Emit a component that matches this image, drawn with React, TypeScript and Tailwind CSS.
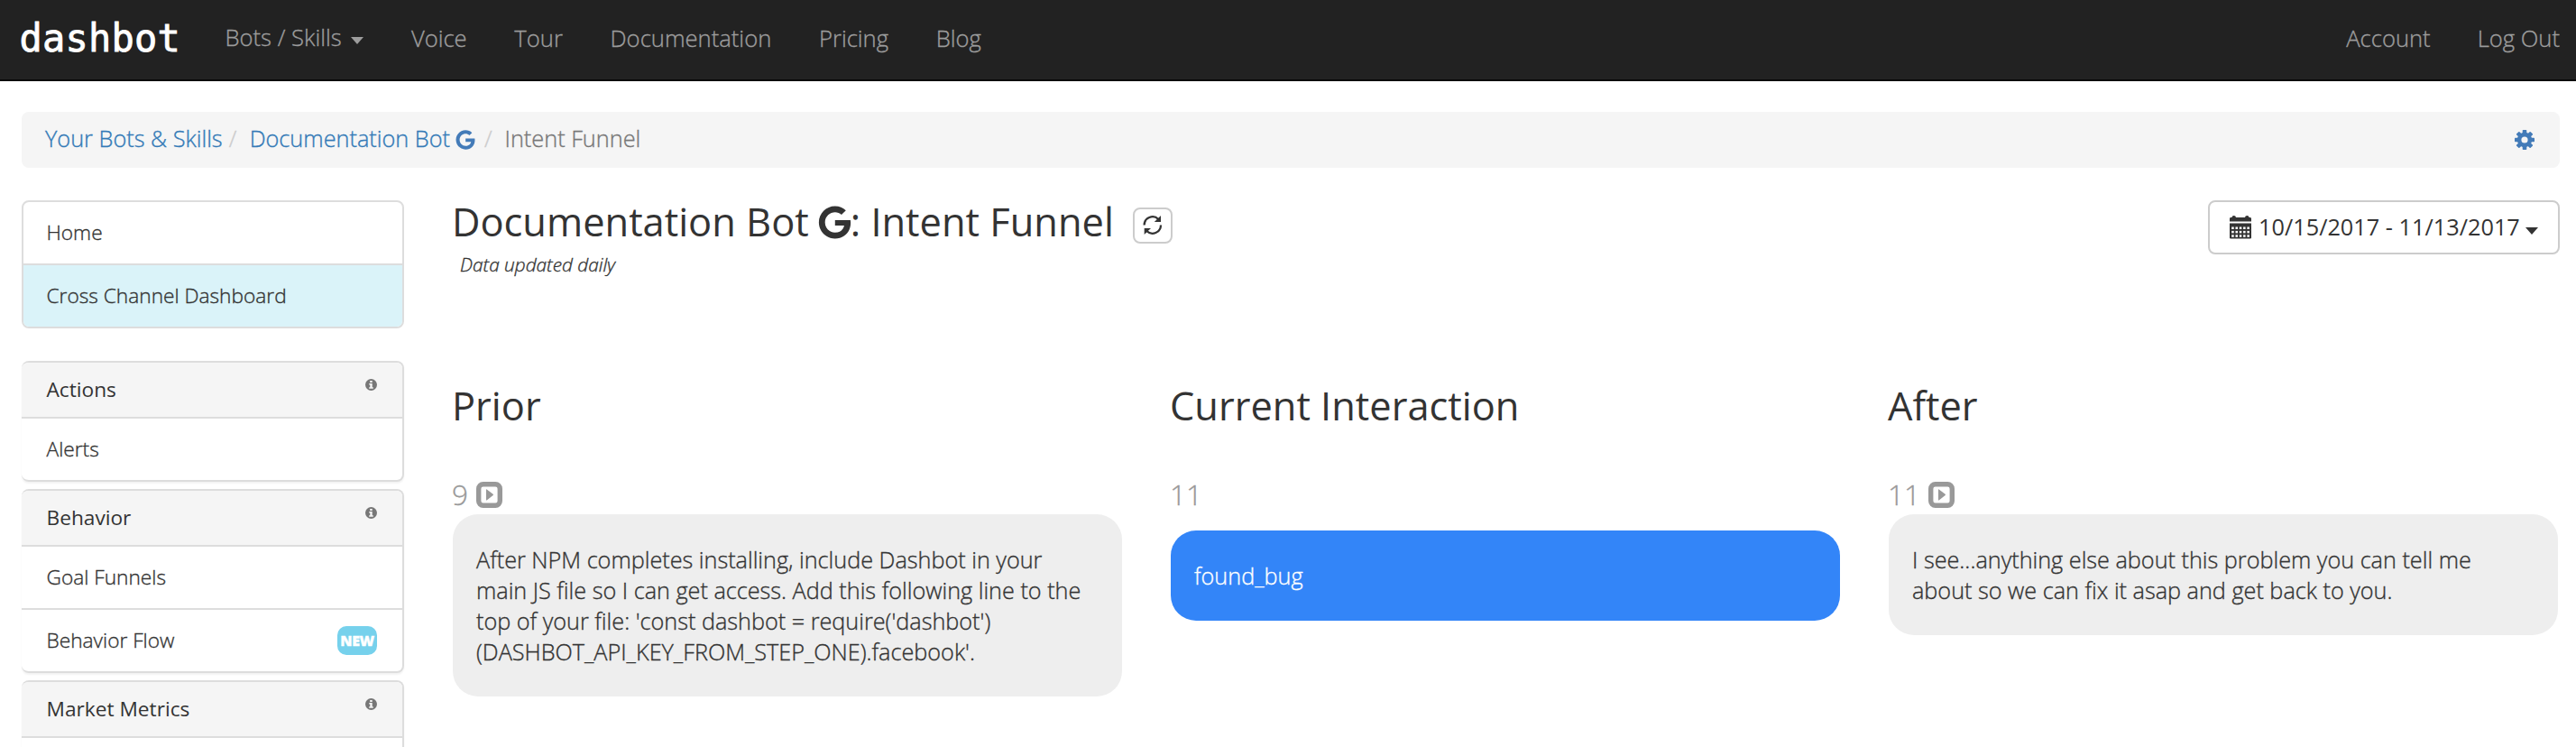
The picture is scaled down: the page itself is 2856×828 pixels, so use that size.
import type { ReactNode } from "react";
import { FaGoogle } from "react-icons/fa";

const LIGHT = "font-light [-webkit-text-stroke:0.35px_currentColor]";

function Caret({ className = "" }: { className?: string }) {
  return (
    <svg className={"h-2 w-3.5 shrink-0 " + className} viewBox="0 0 14 8" fill="currentColor">
      <path d="M0 0h14L7 8z" />
    </svg>
  );
}

function InfoIcon() {
  return (
    <svg className="h-[13px] w-[13px] shrink-0" viewBox="0 0 13 13">
      <circle cx="6.5" cy="6.5" r="6.5" fill="#777" />
      <path d="M5.2 1.9h2.5v2H5.2zM4.3 5h3.4v4.2h1.1v1.5H4.2V9.2h1.1V6.4h-1z" fill="#f5f5f5" />
    </svg>
  );
}

const TEETH = [0, 45, 90, 135, 180, 225, 270, 315];

function GearIcon() {
  return (
    <svg className="h-[22px] w-[22px] text-[#437bb8]" viewBox="-11 -11 22 22">
      <circle r="5.9" fill="none" stroke="currentColor" strokeWidth="4.6" />
      {TEETH.map((a) => (
        <rect key={a} x="-2.3" y="-11" width="4.6" height="5" rx="0.8" fill="currentColor" transform={`rotate(${a})`} />
      ))}
    </svg>
  );
}

function RefreshIcon() {
  return (
    <svg className="h-[22px] w-[22px]" viewBox="0 0 22 22" fill="#333">
      <path d="M1.6 10.5A9.2 9.2 0 0 1 17.3 4" fill="none" stroke="#333" strokeWidth="2.3" />
      <path d="M20 0v6.9h-7.2z" />
      <path d="M20 10.5A9.2 9.2 0 0 1 4.3 17" fill="none" stroke="#333" strokeWidth="2.3" />
      <path d="M1.7 21v-7.1H9z" />
    </svg>
  );
}

function CalendarIcon() {
  return (
    <svg className="h-[26px] w-6 shrink-0" viewBox="0 0 24 26" fill="#333">
      <path d="M0 6.6V3.4Q0 2 1.4 2h1Q2.6 0 4.7 0T7 2h10q.2-2 2.3-2t2.3 2h1Q24 2 24 3.4v3.2z" />
      <path d="M0 8.6h24v15.6q0 1.2-1.2 1.2H1.2Q0 25.4 0 24.2z" />
      {[12.5, 16.9, 21.3].map((y) =>
        [2.2, 6.5, 10.8, 15.1, 19.4].map((x) => <rect key={x + "," + y} x={x} y={y} width="2.5" height="2.5" fill="#fff" />)
      )}
    </svg>
  );
}

function PlayIcon() {
  return (
    <svg className="h-[29px] w-[29px] shrink-0" viewBox="0 0 29 29">
      <rect x="2.7" y="2.7" width="23.6" height="23.6" rx="5" fill="none" stroke="#999" strokeWidth="5.4" />
      <path d="M11 8.9q0-.8.7-.4l7 5.3q.6.7 0 1.3l-7 5.3q-.7.4-.7-.4z" fill="#999" />
    </svg>
  );
}

function Panel({ title, children }: { title: string; children?: ReactNode }) {
  return (
    <section className="mb-2 overflow-hidden rounded-lg border-y-2 border-r-2 border-[#ddd] bg-white shadow-[0_2px_2px_rgba(0,0,0,0.05)]">
      <h3 className="flex h-[60px] justify-between bg-[#f5f5f5] pr-7 pl-[27.5px]">
        <span className="leading-[60px]">{title}</span>
        <span className="pt-[18px]">
          <InfoIcon />
        </span>
      </h3>
      {children}
    </section>
  );
}

function PanelRow({ label, badge }: { label?: string; badge?: string }) {
  return (
    <div className={"flex h-[70px] items-center justify-between border-t-2 border-[#ddd] pr-7 pl-[27.5px] " + LIGHT}>
      <span>{label}</span>
      {badge && (
        <span className="flex h-8 w-11 items-center justify-center rounded-[10px] bg-[#76d1ec] text-[16px] font-extrabold tracking-[-0.4px] text-white">
          {badge}
        </span>
      )}
    </div>
  );
}

type ColumnProps = { title: string; count: number; lines: string[]; current?: boolean };

function Column({ title, count, lines, current }: ColumnProps) {
  return (
    <section className="w-[742px]">
      <h2 className="-ml-px h-12 text-[43.4px] leading-[50px]">{title}</h2>
      <div className={"mt-[60px] -ml-px flex h-[30px] items-center text-[31.5px] text-[#999] " + LIGHT}>
        <span className="mr-[9px] leading-[30px]">{count}</span>
        {!current && <PlayIcon />}
      </div>
      <div
        className={
          "rounded-[28px] py-[33px] pl-[26px] text-[25.22px] leading-[34px] whitespace-nowrap " +
          LIGHT +
          (current ? " mt-[25px] bg-[#3385f8] text-white" : " mt-[7px] bg-[#eee]")
        }
      >
        {lines.map((l) => (
          <p key={l}>{l}</p>
        ))}
      </div>
    </section>
  );
}

export default function App() {
  return (
    <div className="h-[828px] w-[2856px] overflow-hidden bg-white font-['Open_Sans',sans-serif] text-[#333]">
      <nav
        className={
          "flex h-[90px] items-center border-b-2 border-[#080808] bg-[#222] pr-[18px] pb-[2px] pl-[21.5px] text-[25.6px] text-[#9d9d9d] " +
          LIGHT
        }
      >
        <span className="w-[228px] font-['DejaVu_Sans_Mono',monospace] text-[42px] leading-[60px] font-normal tracking-[0.2px] text-white [-webkit-text-stroke:0.8px_white]">
          dashbot
        </span>
        <div className="flex grow items-center gap-[52.7px]">
          <span className="flex items-center pb-[2px]">
            Bots / Skills <Caret className="mt-[7px] ml-[10.5px]" />
          </span>
          <span>Voice</span>
          <span>Tour</span>
          <span>Documentation</span>
          <span>Pricing</span>
          <span>Blog</span>
        </div>
        <div className="flex gap-[52px]">
          <span>Account</span>
          <span>Log Out</span>
        </div>
      </nav>

      <div
        className={
          "mx-6 mt-[34px] flex h-[62px] w-[2814px] items-center rounded-lg bg-[#f5f5f5] pr-7 pb-[2px] pl-[26px] text-[25.3px] " +
          LIGHT
        }
      >
        <span className="text-[#337ab7]">Your Bots &amp; Skills</span>
        <span className="mr-[14px] ml-[7px] w-[9px] text-[#ccc]">/</span>
        <span className="flex items-center text-[#337ab7]">
          Documentation Bot <FaGoogle className="mt-0.5 ml-[6px] h-[22px] w-[22px] text-[#437bb8]" />
        </span>
        <span className="mr-[13.5px] ml-[10px] w-[9px] text-[#ccc]">/</span>
        <span className="grow text-[#777]">Intent Funnel</span>
        <span className="pt-[2px]">
          <GearIcon />
        </span>
      </div>

      <div className="mt-9 flex pl-6">
        <aside className="w-[424px] shrink-0 text-[22.7px]">
          <div className={"mb-9 overflow-hidden rounded-lg border-2 border-[#ddd] " + LIGHT}>
            <div className="h-[68px] pl-[25.5px] leading-[68px]">Home</div>
            <div className="h-[70px] border-t-2 border-[#ddd] bg-[#daf3f9] pl-[25.5px] leading-[68px]">
              Cross Channel Dashboard
            </div>
          </div>
          <Panel title="Actions">
            <PanelRow label="Alerts" />
          </Panel>
          <Panel title="Behavior">
            <PanelRow label="Goal Funnels" />
            <PanelRow label="Behavior Flow" badge="NEW" />
          </Panel>
          <Panel title="Market Metrics">
            <PanelRow />
          </Panel>
        </aside>

        <main className="ml-[54px] w-[2336px]">
          <header className="flex h-[84px] items-start justify-between">
            <div>
              <div className="flex h-[46px] items-center">
                <h1 className="-ml-px flex items-center pt-[2px] text-[43.4px] leading-[46px] whitespace-nowrap">
                  Documentation Bot
                  <FaGoogle className="mt-[1px] mr-[-1px] ml-[10px] h-[37px] w-[37px]" />: Intent Funnel
                </h1>
                <span className="mt-[10px] ml-[21px] flex h-10 w-11 items-center justify-center rounded-lg border-2 border-[#ccc]">
                  <RefreshIcon />
                </span>
              </div>
              <p className={"mt-[11px] ml-2 text-[20.8px] leading-7 italic " + LIGHT}>Data updated daily</p>
            </div>
            <div className="flex h-[60px] w-[390px] items-center rounded-lg border-2 border-[#ccc] pl-[22px] text-[25.3px] whitespace-nowrap">
              <CalendarIcon />
              <span className="ml-2">10/15/2017 - 11/13/2017</span>
              <Caret className="mt-2 ml-[6px]" />
            </div>
          </header>

          <div className="mt-[119px] flex gap-[54px]">
            <Column
              title="Prior"
              count={9}
              lines={[
                "After NPM completes installing, include Dashbot in your",
                "main JS file so I can get access. Add this following line to the",
                "top of your file: 'const dashbot = require('dashbot')",
                "(DASHBOT_API_KEY_FROM_STEP_ONE).facebook'.",
              ]}
            />
            <Column title="Current Interaction" count={11} lines={["found_bug"]} current />
            <Column
              title="After"
              count={11}
              lines={[
                "I see...anything else about this problem you can tell me",
                "about so we can fix it asap and get back to you.",
              ]}
            />
          </div>
        </main>
      </div>
    </div>
  );
}
